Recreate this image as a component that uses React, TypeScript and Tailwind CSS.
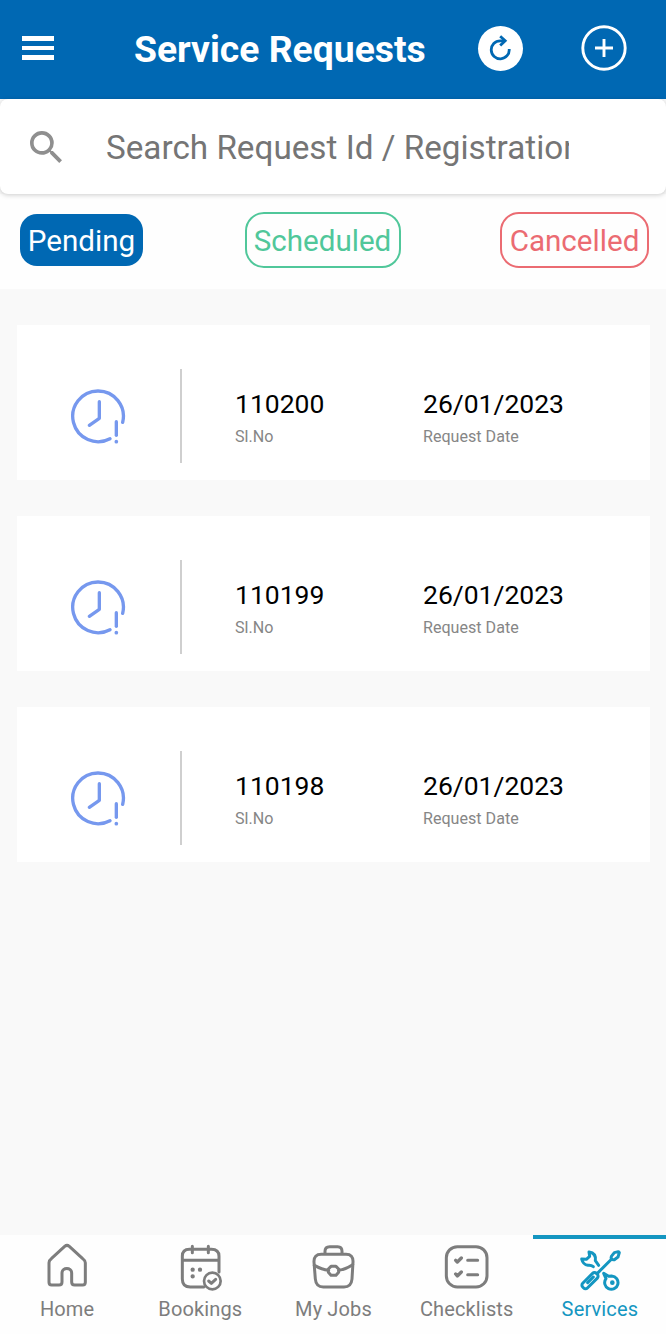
import type { ReactNode } from "react";

type ServiceRequest = { id: string; date: string };

const requests: ServiceRequest[] = [
  { id: "110200", date: "26/01/2023" },
  { id: "110199", date: "26/01/2023" },
  { id: "110198", date: "26/01/2023" },
];

function Header() {
  return (
    <header className="flex h-[99px] shrink-0 items-center bg-[#0068b3] pb-[3px] text-white">
      <button aria-label="Menu" className="ml-[22px] flex w-8 flex-col gap-[5px]">
        <span className="h-[4.5px] w-full bg-white" />
        <span className="h-[4.5px] w-full bg-white" />
        <span className="h-[4.5px] w-full bg-white" />
      </button>
      <h1 className="ml-[80px] w-[344px] pt-[3px] text-[37.3px] leading-none font-bold whitespace-nowrap">Service Requests</h1>
      <button aria-label="Refresh" className="flex size-[45px] items-center justify-center rounded-full bg-white">
        <svg viewBox="0 0 45 45" className="size-[45px]" fill="none" stroke="#0068b3" strokeWidth="2.8">
          <path d="M27 14.8h-4.8A9 9 0 1 0 31.2 23" />
          <path d="M22.2 10.2 27.2 14.8 22.2 19.6" />
        </svg>
      </button>
      <button aria-label="Add request" className="ml-[58px]">
        <svg viewBox="0 0 46 46" className="size-[46px]" fill="none" stroke="white" strokeWidth="2.9">
          <circle cx="23" cy="23" r="21.2" />
          <path d="M14 23h18M23 14v18" />
        </svg>
      </button>
    </header>
  );
}

function SearchBar() {
  return (
    <div className="relative">
      <div className="flex h-[95px] items-center rounded-lg bg-white shadow-[0_1px_5px_rgba(0,0,0,0.2)]">
        <svg viewBox="3 3 17.5 17.5" className="ml-[30px] size-8 shrink-0" fill="#8f8f8f">
          <path d="M15.5 14h-.79l-.28-.27A6.47 6.47 0 0 0 16 9.5 6.5 6.5 0 1 0 9.5 16c1.61 0 3.09-.59 4.23-1.57l.27.28v.79l5 4.99L20.49 19l-4.99-5zm-6 0C7.01 14 5 11.99 5 9.5S7.01 5 9.5 5 14 7.01 14 9.5 11.99 14 9.5 14z" />
        </svg>
        <div className="ml-[44px] w-[463px] overflow-hidden pt-[2px] text-[33.25px] leading-[44px] whitespace-nowrap text-[#757575]">
          Search Request Id / Registration
        </div>
      </div>
    </div>
  );
}

function Filters() {
  return (
    <div className="flex h-[95px] shrink-0 items-center justify-between bg-[#fefefe] pr-[17px] pb-[3px] pl-5 text-[29.6px] leading-none">
      <button className="flex h-[52px] w-[123px] items-center justify-center rounded-[17px] bg-[#0068b3] pt-[3px] text-white">Pending</button>
      <button className="ml-[2px] flex h-14 w-[156px] items-center justify-center rounded-[19px] border-2 border-[#50c79a] pt-[3px] text-[#50c79a]">Scheduled</button>
      <button className="flex h-14 w-[149px] items-center justify-center rounded-[19px] border-2 border-[#eb6b72] pt-[3px] text-[#eb6b72]">Cancelled</button>
    </div>
  );
}

function PendingIcon() {
  return (
    <svg viewBox="210 234 168 168" className="size-14" fill="none" stroke="#7698ee" strokeWidth="10" strokeLinecap="round" strokeLinejoin="round">
      <path d="M368 334A76 76 0 1 0 330 383" />
      <path d="M298 272v50l-30 21" />
      <path d="M349 332v41" />
      <circle cx="349" cy="392" r="5.5" fill="#7698ee" stroke="none" />
    </svg>
  );
}

function Field({ value, label }: { value: string; label: string }) {
  return (
    <div className="w-[188px]">
      <div className="text-[26.5px] leading-8 text-black">{value}</div>
      <div className="pt-px text-[16.1px] leading-8 text-[#868686]">{label}</div>
    </div>
  );
}

function RequestCard({ request }: { request: ServiceRequest }) {
  return (
    <article className="flex h-[155px] bg-white pt-11">
      <div className="flex w-[163px] justify-center pt-[20px] pr-[2px]">
        <PendingIcon />
      </div>
      <div className="h-[94px] w-[2px] bg-[#cfcfcf]" />
      <div className="flex pt-[19px] pl-[53px]">
        <Field value={request.id} label="Sl.No" />
        <Field value={request.date} label="Request Date" />
      </div>
    </article>
  );
}

function NavItem({ label, box, active, children }: { label: string; box: string; active?: boolean; children: ReactNode }) {
  return (
    <button
      className={
        active
          ? "flex h-full flex-1 flex-col items-center border-t-4 border-[#1496c1] pt-1 text-[#1496c1]"
          : "flex h-full flex-1 flex-col items-center border-t-4 border-transparent pt-1 text-[#7d7d7d]"
      }
    >
      <svg viewBox={box} className="size-12" fill="none" stroke="currentColor" strokeWidth="9" strokeLinecap="round" strokeLinejoin="round">
        {children}
      </svg>
      <span className="mt-1.5 pl-px text-[20px] leading-6 tracking-[0.15px]">{label}</span>
    </button>
  );
}

function BottomNav() {
  return (
    <nav className="flex h-[99px] shrink-0 bg-[#fefefe]">
      <NavItem label="Home" box="128 54 144 144">
        <path d="M146 113q0-7 7-12l40-37q7-6 14 0l40 37q8 6 8 12v59q0 8-8 8h-24q-9 0-9-9v-27c0-18-29-18-29 0v27q0 9-9 9h-22q-8 0-8-8z" />
      </NavItem>
      <NavItem label="Bookings" box="527 54 144 144">
        <path d="M610 186h-40q-24 0-24-24V94q0-21 21-21h66q23 0 23 21v47M546 106h110M576 64v19M624 64v19" />
        <circle cx="636" cy="168" r="25" strokeWidth="8" />
        <path d="m625 168 8 7 13-12" strokeWidth="9" />
        <path d="M577 134v.1M599 134v.1M577 154v.1" strokeWidth="13" />
      </NavItem>
      <NavItem label="My Jobs" box="147 54 144 144">
        <path d="M184 88h74q22 0 21 23l-3 51q-2 24-24 24h-62q-22 0-24-24l-4-51q-1-23 22-23zM195 87v-8q0-14 14-14h24q13 0 13 14v8" />
        <path d="M163 121q23 13 43 15M236 136q20-3 42-17" />
        <path d="m213 124h15l8 8v10l-8 9h-15l-8-9v-10z" />
      </NavItem>
      <NavItem label="Checklists" box="547 54 144 144">
        <rect x="560" y="65" width="122" height="121" rx="33" />
        <path d="m588 106 5 5 12-12M588 147l5 6 12-12" strokeWidth="10" />
        <path d="M624 106h30M624 149h30" strokeWidth="9" />
      </NavItem>
      <NavItem label="Services" box="15 9 144 144" active>
        <path d="m86 76-10-14q3-23-19-26l2 13-10 9-14-1q4 17 19 19 10-1 16 4" />
        <rect x="31" y="112" width="58" height="20" rx="8" transform="rotate(-45 60 122)" />
        <path d="m82 100 43-43M53 128l17-17" />
        <path d="m124 49 9-11 12-3 3 3-4 13-11 8q-5 1-8-2-3-4-1-8z" />
        <path d="m101 100 7 16a20 20 0 1 0 17-8l-9 1z" />
        <circle cx="127" cy="128" r="3.5" strokeWidth="7" />
      </NavItem>
    </nav>
  );
}

export default function App() {
  return (
    <div className="flex h-[1334px] w-[666px] flex-col overflow-hidden bg-[#f9f9f9] font-['Roboto',sans-serif]">
      <Header />
      <SearchBar />
      <Filters />
      <main className="flex flex-1 flex-col gap-9 pt-9 pr-4 pl-[17px]">
        {requests.map((request) => (
          <RequestCard key={request.id} request={request} />
        ))}
      </main>
      <BottomNav />
    </div>
  );
}
